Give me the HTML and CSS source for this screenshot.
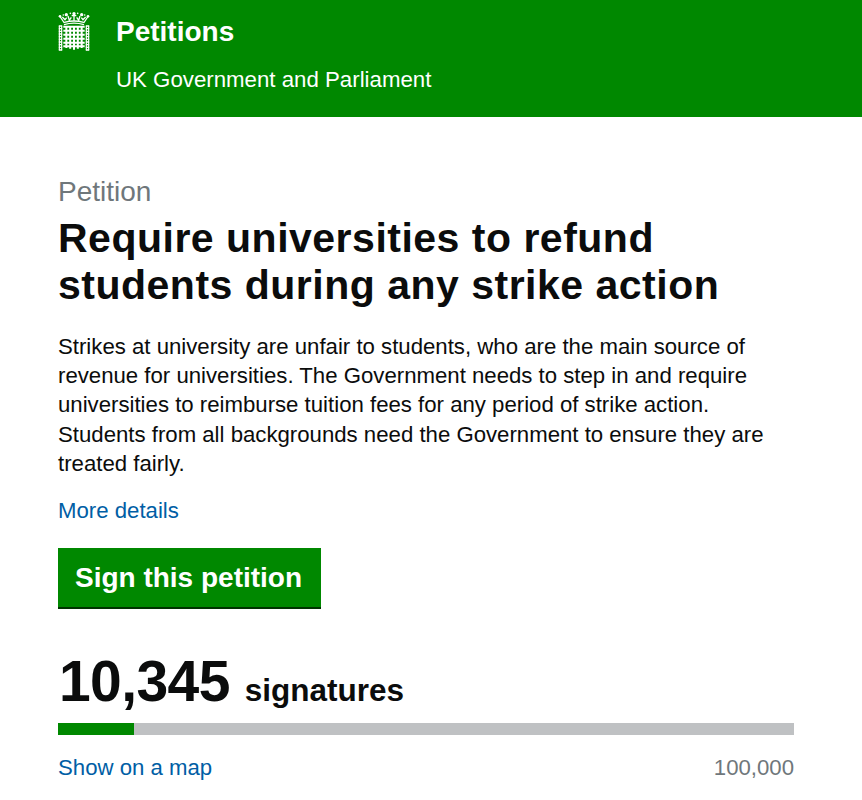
FILE: index.html
```
<!DOCTYPE html>
<html lang="en">
<head>
    <meta charset="UTF-8">
    <meta name="viewport" content="width=device-width, initial-scale=1.0">
    <title>Petitions</title>
    <link rel="stylesheet" href="styles.css">
</head>
<body>
    <header class="header">
        <svg class="logo" viewBox="22 21 96 117" fill="none" stroke="#fff">
            <!-- crown -->
            <path stroke-width="4" d="M29 36l12 18M111 36l-12 18M40 59q30-9 60 0M41 52q29-8 58 0"/>
            <path stroke-width="4" d="M35 36l8 8 5-6M105 36l-8 8-5-6M70 25v22M63 32h14M52 33l4 13 6-9M88 33l-4 13-6-9"/>
            <g fill="#fff" stroke="none">
                <circle cx="28" cy="34" r="4"/>
                <circle cx="38" cy="30" r="2.5"/>
                <circle cx="47" cy="29" r="5"/>
                <circle cx="59" cy="25" r="2.5"/>
                <circle cx="70" cy="26" r="5"/>
                <circle cx="81" cy="25" r="2.5"/>
                <circle cx="93" cy="29" r="5"/>
                <circle cx="102" cy="30" r="2.5"/>
                <circle cx="112" cy="34" r="4"/>
            </g>
            <!-- portcullis -->
            <path stroke-width="6" d="M47 63v66M58.5 63v68M70 63v71M81.5 63v68M93 63v66"/>
            <path stroke-width="6" d="M38 65h64M38 77h64M38 89h64M38 101h64M38 113h64M38 124h64"/>
            <!-- chains -->
            <path stroke-width="3.5" d="M26 62v74M33 62v74M107 62v74M114 62v74"/>
            <path stroke-width="10" stroke-dasharray="4 4" d="M29.5 61v76M110.5 61v76"/>
        </svg>
        <div class="header-text">
            <a class="site-name">Petitions</a>
            <p class="tagline">UK Government and Parliament</p>
        </div>
    </header>

    <main class="main-container">
        <h1 class="title"><span class="context">Petition</span> Require universities to refund students during any strike action</h1>
        <p class="intro">Strikes at university are unfair to students, who are the main source of revenue for universities. The Government needs to step in and require universities to reimburse tuition fees for any period of strike action. Students from all backgrounds need the Government to ensure they are treated fairly.</p>
        <a class="details" href="#">More details</a>
        <a class="button" href="#">Sign this petition</a>
        <p class="count"><span class="number">10,345</span> <span class="count-label">signatures</span></p>
        <div class="graph">
            <div class="bar" style="width: 10.345%"></div>
        </div>
        <div class="graph-info">
            <a href="#">Show on a map</a>
            <span class="goal">100,000</span>
        </div>
    </main>
</body>
</html>
```
FILE: styles.css
```
body {
    margin: 0;
    background-color: #ffffff;
    color: #0b0c0c;
    font-family: "Liberation Sans", Arial, sans-serif;
    font-size: 22.2px;
    line-height: 29.2px;
}
p, h1 {
    margin: 0;
}
a {
    color: #005ea5;
    text-decoration: none;
}
.header {
    display: flex;
    gap: 26px;
    height: 117px;
    padding-left: 58px;
    box-sizing: border-box;
    background-color: #008800;
    color: #ffffff;
}
.logo {
    width: 32px;
    height: 39px;
    margin-top: 12px;
}
.header-text {
    padding-top: 16px;
}
.site-name {
    display: block;
    color: #ffffff;
    font-size: 28px;
    font-weight: bold;
    line-height: 32px;
}
.tagline {
    margin-top: 17px;
    font-size: 22.25px;
}
.main-container {
    width: 736px;
    margin-left: 58px;
    padding-top: 57px;
}
.title {
    font-size: 41px;
    line-height: 47px;
    letter-spacing: 0.5px;
}
.context {
    display: block;
    color: #6f777b;
    font-size: 28px;
    font-weight: normal;
    line-height: 35px;
    letter-spacing: 0;
    margin-bottom: 6px;
}
.intro {
    margin-top: 23px;
}
.details {
    display: block;
    margin-top: 18px;
}
.button {
    display: block;
    box-sizing: border-box;
    width: 263px;
    height: 61px;
    margin-top: 23px;
    padding-right: 2px;
    background-color: #008800;
    border-bottom: 2px solid #003300;
    color: #ffffff;
    font-size: 28px;
    font-weight: bold;
    line-height: 59px;
    text-align: center;
}
.count {
    display: flex;
    align-items: baseline;
    gap: 15px;
    margin-top: 40px;
    padding-left: 1px;
    font-weight: bold;
    line-height: 64px;
}
.number {
    font-size: 57px;
    letter-spacing: -0.6px;
}
.count-label {
    font-size: 31.5px;
}
.graph {
    height: 12px;
    margin-top: 1px;
    background-color: #bfc1c3;
}
.bar {
    height: 100%;
    background-color: #008800;
}
.graph-info {
    display: flex;
    justify-content: space-between;
    margin-top: 18px;
}
.goal {
    color: #6f777b;
}
```
